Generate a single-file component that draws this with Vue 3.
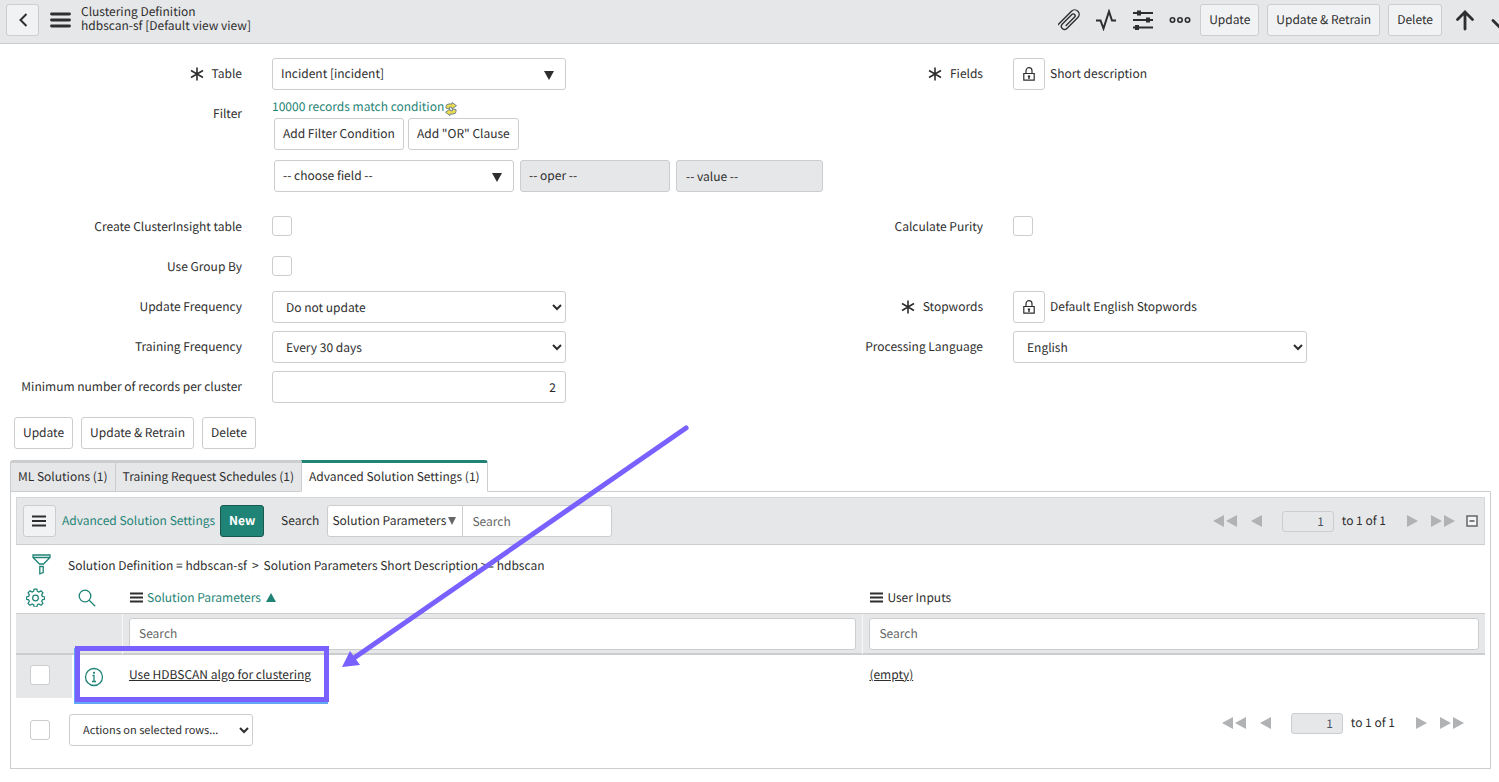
<script setup>
import { ref } from 'vue'

const formActions = ['Update', 'Update & Retrain', 'Delete']
const tabs = [
  { label: 'ML Solutions (1)', active: false },
  { label: 'Training Request Schedules (1)', active: false },
  { label: 'Advanced Solution Settings (1)', active: true }
]
const minRecords = ref('2')
const page = ref('1')
</script>

<template>
  <div class="page">
    <header class="topbar">
      <button class="btn back" aria-label="Back">
        <svg width="10" height="16" viewBox="0 0 10 16"><path d="M8.500 2 2.500 8l6 6" class="stroke-2" /></svg>
      </button>
      <button class="plain menu" aria-label="Additional actions">
        <svg width="21" height="16" viewBox="0 0 21 16"><path d="M1.500 2h18M1.500 8h18M1.500 14h18" class="stroke-3" /></svg>
      </button>
      <h1 class="title">
        <span>Clustering Definition</span>
        <span>hdbscan-sf [Default view view]</span>
      </h1>
      <nav class="tools">
        <button class="plain" aria-label="Attachments">
          <svg width="22" height="22" viewBox="0 0 22 22"><g transform="rotate(45 11 11)"><path d="M6.500 23V3a4.500 4.500 0 0 1 9 0v15.500a3.200 3.200 0 0 1-6.400 0V5a1.900 1.900 0 0 1 3.800 0v12" class="stroke-1" /></g></svg>
        </button>
        <button class="plain" aria-label="Activity">
          <svg width="22" height="22" viewBox="0 0 22 22"><path d="M1 11.500h4.500l3 8 5.500-17 3 9H21" class="stroke-2" /></svg>
        </button>
        <button class="plain" aria-label="Personalize form">
          <svg width="22" height="22" viewBox="0 0 22 22"><path d="M1 4h20M1 11h20M1 18.500h20" class="stroke-2" /><path d="M5 1.500h4v5H5zM14 8.500h4v5h-4zM3 16h4v5H3z" class="fill" /></svg>
        </button>
        <button class="plain" aria-label="More options">
          <svg width="22" height="22" viewBox="0 0 22 22"><g class="stroke-dots"><circle cx="3.500" cy="11" r="2.200" /><circle cx="11" cy="11" r="2.200" /><circle cx="18.500" cy="11" r="2.200" /></g></svg>
        </button>
      </nav>
      <div class="top-actions">
        <button v-for="label in formActions" :key="label" class="btn">{{ label }}</button>
      </div>
      <button class="plain up" aria-label="Previous record">
        <svg width="20" height="22" viewBox="0 0 20 22"><path d="M10 20V3M2.500 10.500 10 3l7.500 7.500" class="stroke-3" /></svg>
      </button>
      <button class="plain down" aria-label="Next record">
        <svg width="20" height="22" viewBox="0 0 20 22"><path d="M10 2.500V19M2 11.500l8 8 8-8" class="stroke-3" /></svg>
      </button>
    </header>

    <form class="form" @submit.prevent>
      <div class="field left">
        <label for="table"><svg class="req" width="14" height="14" viewBox="0 0 14 14"><path d="M7 .5v13M1 3.500l12 7M13 3.500l-12 7" class="stroke-req" /></svg>Table</label>
        <span class="combo">
          <select id="table" class="control bare"><option>Incident [incident]</option></select>
          <svg class="tri" width="10" height="9" viewBox="0 0 10 9"><path d="M0 0h10L5 9z" class="fill" /></svg>
        </span>
      </div>
      <div class="field right">
        <span class="label"><svg class="req" width="14" height="14" viewBox="0 0 14 14"><path d="M7 .5v13M1 3.500l12 7M13 3.500l-12 7" class="stroke-req" /></svg>Fields</span>
        <div class="locked">
          <button class="btn white lock" aria-label="Unlock Fields">
            <svg width="12" height="14" viewBox="0 0 12 14"><path d="M.8 6.500h10.400v6.700H.8zM3 6.500V3.700a3 3 0 0 1 6 0v2.800" class="stroke-lock" /><path d="M4.800 8.500h2.400v1.300l-.5.500v1.700H5.300v-1.700l-.5-.5z" class="fill" /></svg>
          </button>
          <span>Short description</span>
        </div>
      </div>

      <div class="field left filter">
        <label for="choose">Filter</label>
        <div class="builder">
          <div class="match">
            <a href="#">10000 records match condition</a>
            <svg width="12" height="14" viewBox="0 0 12 14"><path d="M1 6V4.500Q1 2 4 2h3V.5l4.500 3.200L7 7V5.200H4.500V7z" class="refresh" /><path d="M11 7.500V9.500Q11 12 8 12H5v1.500L.5 10.300 5 7v1.700h2.500V7z" class="refresh" /></svg>
          </div>
          <div class="line">
            <button class="btn white">Add Filter Condition</button>
            <button class="btn white">Add "OR" Clause</button>
          </div>
          <div class="line conditions">
            <span class="combo choose">
              <select id="choose" class="control bare"><option>-- choose field --</option></select>
              <svg class="tri" width="10" height="9" viewBox="0 0 10 9"><path d="M0 0h10L5 9z" class="fill" /></svg>
            </span>
            <select class="control bare disabled" aria-label="Operator" disabled><option>-- oper --</option></select>
            <input class="control disabled value" aria-label="Value" value="-- value --" disabled>
          </div>
        </div>
      </div>

      <div class="field left">
        <label for="insight">Create ClusterInsight table</label>
        <input id="insight" type="checkbox" class="check">
      </div>
      <div class="field right">
        <label for="purity">Calculate Purity</label>
        <input id="purity" type="checkbox" class="check">
      </div>

      <div class="field left">
        <label for="group">Use Group By</label>
        <input id="group" type="checkbox" class="check">
      </div>

      <div class="field left">
        <label for="updfreq">Update Frequency</label>
        <select id="updfreq" class="control native"><option>Do not update</option></select>
      </div>
      <div class="field right">
        <span class="label"><svg class="req" width="14" height="14" viewBox="0 0 14 14"><path d="M7 .5v13M1 3.500l12 7M13 3.500l-12 7" class="stroke-req" /></svg>Stopwords</span>
        <div class="locked">
          <button class="btn white lock" aria-label="Unlock Stopwords">
            <svg width="12" height="14" viewBox="0 0 12 14"><path d="M.8 6.500h10.400v6.700H.8zM3 6.500V3.700a3 3 0 0 1 6 0v2.800" class="stroke-lock" /><path d="M4.800 8.500h2.400v1.300l-.5.500v1.700H5.300v-1.700l-.5-.5z" class="fill" /></svg>
          </button>
          <span>Default English Stopwords</span>
        </div>
      </div>

      <div class="field left">
        <label for="trainfreq">Training Frequency</label>
        <select id="trainfreq" class="control native"><option>Every 30 days</option></select>
      </div>
      <div class="field right">
        <label for="lang">Processing Language</label>
        <select id="lang" class="control native"><option>English</option></select>
      </div>

      <div class="field left">
        <label for="minrec">Minimum number of records per cluster</label>
        <input id="minrec" v-model="minRecords" class="control number">
      </div>
    </form>

    <div class="form-actions">
      <button v-for="label in formActions" :key="label" class="btn white">{{ label }}</button>
    </div>

    <section class="related">
      <div class="tabs" role="tablist">
        <button v-for="tab in tabs" :key="tab.label" class="tab" :class="{ active: tab.active }" role="tab">{{ tab.label }}</button>
      </div>
      <div class="panel">
        <div class="listbar">
          <button class="btn burger" aria-label="List actions">
            <svg width="14" height="12" viewBox="0 0 14 12"><path d="M0 1.500h14M0 6h14M0 10.500h14" class="stroke-bar" /></svg>
          </button>
          <a href="#" class="list-title">Advanced Solution Settings</a>
          <button class="btn new">New</button>
          <label for="search-text" class="search-label">Search</label>
          <div class="search-group">
            <span class="combo search-combo">
              <select class="control bare" aria-label="Search column"><option>Solution Parameters</option></select>
              <svg class="tri" width="8" height="8" viewBox="0 0 8 8"><path d="M0 0h8L4 8z" class="fill-soft" /></svg>
            </span>
            <input id="search-text" class="control search-text" placeholder="Search">
          </div>
          <div class="pager">
            <button class="plain" aria-label="First page"><svg width="24" height="12" viewBox="0 0 24 12"><path d="M11 0v12L0 6zM24 0v12L13 6z" /></svg></button>
            <button class="plain prev" aria-label="Previous page"><svg width="11" height="12" viewBox="0 0 11 12"><path d="M11 0v12L0 6z" /></svg></button>
            <input v-model="page" aria-label="Page" disabled>
            <span>to 1 of 1</span>
            <button class="plain next" aria-label="Next page"><svg width="11" height="12" viewBox="0 0 11 12"><path d="M0 0v12l11-6z" /></svg></button>
            <button class="plain last" aria-label="Last page"><svg width="24" height="12" viewBox="0 0 24 12"><path d="M0 0v12l11-6zM13 0v12l11-6z" /></svg></button>
          </div>
          <button class="plain collapse" aria-label="Collapse list">
            <svg width="12" height="12" viewBox="0 0 12 12"><path d="M1 1h10v10H1z" class="box" /><path d="M3.500 6h5" class="stroke-lock" /></svg>
          </button>
        </div>

        <div class="crumbs">
          <svg width="19" height="21" viewBox="0 0 19 21"><path d="M1 1h17v2.500l-6.500 6.500h-4L1 3.500zM1 3.500h17M7.800 12.500h3.400v6l-3.400 1.300z" class="teal-stroke" /></svg>
          <a href="#">Solution Definition = hdbscan-sf</a>
          <span>&gt;</span>
          <a href="#">Solution Parameters Short Description &gt;= hdbscan</a>
        </div>

        <table class="list">
          <colgroup><col class="c-check"><col class="c-info"><col class="c-param"><col></colgroup>
          <thead>
            <tr class="heads">
              <th><svg class="gear" width="19" height="19" viewBox="0 0 20 20"><path d="M8.600 1.200h2.800l.6 2.400 1.600.7 2.200-1.300 2 2-1.300 2.200.7 1.600 2.400.6v2.400l-2.400.6-.7 1.600 1.300 2.200-2 2-2.200-1.300-1.600.7-.6 2.400H8.600L8 17.600l-1.600-.7-2.200 1.300-2-2L3.500 14l-.7-1.600-2.400-.6V9.400l2.400-.6.700-1.600L2.200 5l2-2 2.200 1.300L8 3.600z" class="teal-stroke" /><circle cx="10" cy="10.500" r="3" class="teal-stroke" /></svg></th>
              <th><svg class="glass" width="18" height="18" viewBox="0 0 18 18"><circle cx="7" cy="7" r="5.800" class="teal-stroke" /><path d="m11.200 11.200 6 6" class="teal-stroke" /></svg></th>
              <th>
                <span class="head"><svg width="13" height="11" viewBox="0 0 13 11"><path d="M0 1.500h13M0 5.500h13M0 9.500h13" class="stroke-bar" /></svg><a href="#">Solution Parameters</a><svg class="sort" width="10" height="9" viewBox="0 0 10 9"><path d="M0 9h10L5 0z" class="teal" /></svg></span>
              </th>
              <th>
                <span class="head dark"><svg width="13" height="11" viewBox="0 0 13 11"><path d="M0 1.500h13M0 5.500h13M0 9.500h13" class="stroke-bar" /></svg><a href="#">User Inputs</a></span>
              </th>
            </tr>
            <tr class="searches">
              <td></td>
              <td class="divide"></td>
              <td class="divide"><input class="control" aria-label="Search Solution Parameters" placeholder="Search"></td>
              <td><input class="control" aria-label="Search User Inputs" placeholder="Search"></td>
            </tr>
          </thead>
          <tbody>
            <tr class="record">
              <td class="pick"><input type="checkbox" class="check" aria-label="Select record"></td>
              <td class="info">
                <svg width="20" height="20" viewBox="0 0 20 20"><circle cx="10" cy="10" r="8.500" class="teal-stroke" /><path d="M8.500 8.500H10V14.500M8 14.500h4" class="teal-stroke" /><circle cx="10" cy="5.800" r="1.100" class="teal" /></svg>
                <span class="highlight"></span>
              </td>
              <td><a href="#">Use HDBSCAN algo for clustering</a></td>
              <td><a href="#">(empty)</a></td>
            </tr>
          </tbody>
        </table>

        <div class="foot">
          <input type="checkbox" class="check" aria-label="Select all records">
          <select class="control native rows-action" aria-label="Actions on selected rows"><option>Actions on selected rows...</option></select>
          <div class="pager">
            <button class="plain" aria-label="First page"><svg width="24" height="12" viewBox="0 0 24 12"><path d="M11 0v12L0 6zM24 0v12L13 6z" /></svg></button>
            <button class="plain prev" aria-label="Previous page"><svg width="11" height="12" viewBox="0 0 11 12"><path d="M11 0v12L0 6z" /></svg></button>
            <input v-model="page" aria-label="Page" disabled>
            <span>to 1 of 1</span>
            <button class="plain next" aria-label="Next page"><svg width="11" height="12" viewBox="0 0 11 12"><path d="M0 0v12l11-6z" /></svg></button>
            <button class="plain last" aria-label="Last page"><svg width="24" height="12" viewBox="0 0 24 12"><path d="M0 0v12l11-6zM13 0v12l11-6z" /></svg></button>
          </div>
        </div>
      </div>
    </section>

    <svg class="arrow" width="350" height="245" viewBox="0 0 350 245"><path d="M346 4 14 234" /><path d="M2 243 10 227 20 241z" class="tip" /></svg>
  </div>
</template>

<style>
body { background: #fff; }
</style>

<style scoped>
* { box-sizing: border-box; }
.page {
  position: relative;
  font-family: "Noto Sans CJK SC", "Noto Sans", sans-serif;
  font-size: 12px;
  line-height: 16px;
  text-rendering: geometricPrecision;
  color: #2e2e2e;
  overflow: hidden;
}
button, input, select { font: inherit; color: inherit; margin: 0; text-rendering: inherit; }
svg { display: block; flex: none; fill: none; }
a { color: inherit; text-decoration: none; }
.plain { border: 0; background: none; padding: 0; }
.stroke-1 { stroke: #2e2e2e; stroke-width: 1.4; stroke-linecap: round; fill: none; }
.stroke-dots { stroke: #2e2e2e; stroke-width: 1.6; fill: none; }
.stroke-2 { stroke: #2e2e2e; stroke-width: 2; fill: none; }
.stroke-3 { stroke: #2e2e2e; stroke-width: 2.8; stroke-linecap: round; fill: none; }
.stroke-bar { stroke: #2e2e2e; stroke-width: 2; }
.stroke-req { stroke: #2e2e2e; stroke-width: 1.6; }
.stroke-lock { stroke: #2e2e2e; stroke-width: 1.2; fill: none; }
.fill { fill: #2e2e2e; }
.fill-soft { fill: #666; }
.teal { fill: #1f8476; }
.teal-stroke { stroke: #1f8476; stroke-width: 1.3; fill: none; }
.refresh { fill: #f0dc4c; stroke: #71868a; stroke-width: 1; }
.box { stroke: #666; stroke-width: 1.5; fill: #f4f5f6; }

.btn {
  height: 32px;
  border: 1px solid #cbcdcf;
  border-radius: 3px;
  background: #f1f2f4;
  padding: 0 8px;
  white-space: nowrap;
}
.btn.white { background: #fff; }
.control {
  height: 32px;
  width: 100%;
  min-width: 0;
  border: 1px solid #cbcdcf;
  border-radius: 3px;
  background: #fff;
  padding: 0 9px;
}
.control::placeholder { color: #666; opacity: 1; }
.native { padding: 0 0 0 9px; }
.bare { appearance: none; padding: 0 8px; }
.disabled { background: #e6e7e9; color: #2e2e2e; opacity: 1; }
.number { text-align: right; }
.combo { position: relative; display: block; min-width: 0; }
.tri { position: absolute; right: 12px; top: 13px; pointer-events: none; }
.check {
  appearance: none;
  flex: none;
  width: 20px;
  height: 20px;
  border: 1px solid #cbcdcf;
  border-radius: 3px;
  background: #fff;
}

.topbar {
  display: flex;
  align-items: center;
  height: 44px;
  padding: 0 0 3px 6px;
  background: #e6e7e9;
  border-bottom: 1px solid #cbcdcf;
}
.back { width: 33px; padding: 0 11px; }
.menu { margin-left: 11px; }
.title {
  flex: 1;
  display: flex;
  flex-direction: column;
  margin: 0 0 0 10px;
  padding-bottom: 2px;
  font-size: 12px;
  line-height: 14px;
  font-weight: 400;
}
.tools { display: flex; gap: 15px; margin-right: 9px; }
.top-actions { display: flex; gap: 8px; }
.up { margin-left: 13px; }
.down { margin: 0 -12px 0 16px; }

.form {
  display: grid;
  grid-template-columns: 1fr 1fr;
  gap: 8px 0;
  padding: 14px 17px 0 0;
}
.left { grid-column: 1; }
.right { grid-column: 2; }
.field {
  display: grid;
  grid-template-columns: minmax(0, 242fr) minmax(0, 294fr) minmax(0, 145fr);
  column-gap: 30px;
  min-height: 32px;
}
.field > label, .field > .label {
  display: flex;
  justify-content: flex-end;
  align-items: center;
  height: 32px;
  white-space: nowrap;
}
.req { margin-right: 8px; }
.field > .check { margin-top: 5px; }
.locked { display: flex; gap: 5px; white-space: nowrap; line-height: 31px; }
.lock { width: 32px; padding: 0 9px; }
.filter { padding-bottom: 11px; }
.builder { width: max-content; }
.match { display: flex; gap: 1px; height: 20px; color: #1f8476; line-height: 18px; }
.match svg { margin-top: 4px; }
.line { display: flex; gap: 4px; padding-left: 2px; }
.conditions { gap: 6px; margin-top: 10px; }
.choose { width: 240px; }
.conditions > .control { width: 150px; }
.conditions > .value { width: 147px; }

.form-actions { display: flex; gap: 8px; padding: 14px; }

.related { padding: 0 8px 14px 10px; margin-top: -3px; }
.tabs { position: relative; display: flex; }
.tab {
  height: 32px;
  padding: 0 7px;
  border: solid #cbcdcf;
  border-width: 3px 0 1px 1px;
  background: #e6e7e9;
  white-space: nowrap;
}
.tab:first-child { border-top-left-radius: 3px; }
.tab.active {
  background: #fff;
  border-top-color: #1f8476;
  border-bottom-color: #fff;
  border-right-width: 1px;
  border-top-right-radius: 3px;
}
.panel { margin-top: -1px; border: 1px solid #cbcdcf; padding: 5px; }
.listbar {
  display: flex;
  align-items: center;
  height: 48px;
  padding: 0 6px;
  border: 1px solid #d5d7da;
  border-bottom-color: #cbcdcf;
  background: #e6e7e9;
}
.burger { width: 33px; }
.list-title { margin: 0 5px 0 6px; color: #1f8476; white-space: nowrap; }
.new { background: #1f8476; border-color: #17594f; color: #fff; font-weight: 700; width: 44px; }
.search-label { margin: 0 8px 0 17px; }
.search-group { display: flex; }
.search-combo { width: 136px; }
.search-combo .control { padding: 0 4px; border-radius: 3px 0 0 3px; }
.search-combo .tri { right: 7px; top: 12px; }
.search-text { width: 150px; margin-left: -1px; border-radius: 0 3px 3px 0; }
.pager { display: flex; align-items: center; margin-left: auto; white-space: nowrap; }
.pager svg { fill: #b0b2b4; }
.pager .prev { margin: 0 20px 0 14px; }
.pager input {
  width: 52px;
  height: 21px;
  border: 1px solid #cbcdcf;
  border-radius: 3px;
  background: #e6e7e9;
  color: #485563;
  text-align: right;
  padding: 0 9px;
  margin-right: 8px;
}
.pager .next { margin: 0 13px 0 21px; }
.collapse { margin-left: 11px; }

.crumbs { display: flex; align-items: center; gap: 5px; height: 37px; padding-left: 16px; padding-top: 5px; white-space: nowrap; }
.crumbs svg { margin: -4px 12px 0 0; }

.list { width: 100%; table-layout: fixed; border-collapse: separate; border-spacing: 0; }
.c-check { width: 56px; }
.c-info { width: 51px; }
.c-param { width: 50.4%; }
.list th, .list td { padding: 0 6px; text-align: left; font-weight: 400; }
.heads th { height: 32px; border-bottom: 1px solid #cbcdcf; }
.gear { margin-left: 4px; }
.head { display: flex; align-items: center; gap: 4px; color: #1f8476; }
.head svg { margin-left: 1px; }
.head.dark { color: #2e2e2e; }
.searches td { height: 41px; background: #e6e7e9; border-bottom: 2px solid #cbcdcf; }
.searches .divide { border-right: 1px solid #f6f7f7; }
.searches .control { display: block; }
.record td { height: 43px; }
.list .record td { padding-bottom: 3px; }
.record a { text-decoration: underline; }
.list .pick { background: #e6e7e9; padding-left: 14px; }
.pick .check { display: block; }
.info { position: relative; }
.info svg { margin: 4px 0 0 6px; }
.highlight {
  position: absolute;
  left: 3px;
  top: -9px;
  width: 254px;
  height: 56px;
  border: 5px solid #7861ff;
  box-shadow: -1px 2px 0 #62a8f5;
  pointer-events: none;
}
.foot { display: flex; align-items: center; padding: 16px 21px 17px 14px; }
.rows-action { width: 184px; margin-left: 19px; font-size: 11px; }
.foot .pager { margin-top: -14px; }

.arrow { position: absolute; left: 340px; top: 424px; pointer-events: none; stroke: #7861ff; stroke-width: 5; stroke-linecap: round; }
.arrow .tip { fill: #7861ff; stroke: none; }
</style>
